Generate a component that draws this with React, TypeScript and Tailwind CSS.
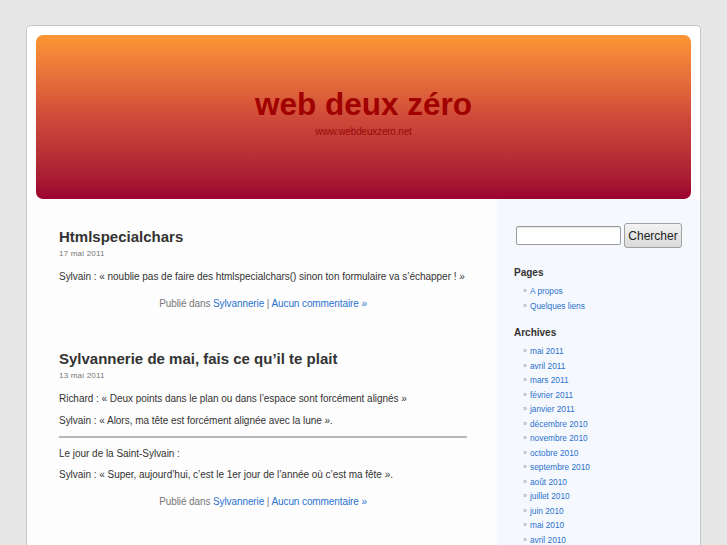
const archives = [
  'mai 2011',
  'avril 2011',
  'mars 2011',
  'février 2011',
  'janvier 2011',
  'décembre 2010',
  'novembre 2010',
  'octobre 2010',
  'septembre 2010',
  'août 2010',
  'juillet 2010',
  'juin 2010',
  'mai 2010',
  'avril 2010',
];

const pages = ['A propos', 'Quelques liens'];

function PostFooter() {
  return (
    <p className="mt-[13px] text-center text-[10px] leading-[14px] tracking-[-0.1px] text-[#777]">
      Publié dans <a className="text-[#2b72d0]">Sylvannerie</a> | <a className="text-[#2b72d0]">Aucun commentaire »</a>
    </p>
  );
}

function SideList({ items }: { items: string[] }) {
  return (
    <ul className="mt-[5px] pl-[9px]">
      {items.map((item) => (
        <li key={item} className="flex items-center gap-[2px] text-[8.3px] leading-[14.5px]">
          <span className="w-[5px] text-[7px] text-[#999]">»</span>
          <a className="text-[#2b72d0]">{item}</a>
        </li>
      ))}
    </ul>
  );
}

export default function App() {
  return (
    <div
      className="min-h-[545px] bg-[#e7e7e7] pt-[25px] text-[#333]"
      style={{ fontFamily: '"Liberation Sans", Arial, sans-serif' }}
    >
      <div className="mx-auto w-[675px] rounded-t-[5px] border border-b-0 border-[#c6c6c6] bg-white">
        <div className="px-[9px] pt-[9px]">
          <div className="flex h-[164px] flex-col items-center rounded-[7px] bg-gradient-to-b from-[#fd9634] via-[#d04a3a] to-[#9c002f] pt-[52px]">
            <h1 className="text-[31.5px] font-bold leading-[34px] text-[#a00000]">web deux zéro</h1>
            <p className="mt-[5px] text-[10px] leading-[12px] tracking-[-0.2px] text-[#9a0a0a]">www.webdeuxzero.net</p>
          </div>
        </div>

        <div className="flex">
          <main className="w-[470px] bg-[#fdfdfd] pb-10 pl-[32px] pr-[30px] pt-[29px] tracking-[-0.03px]">
            <article>
              <h2 className="text-[15px] font-bold leading-[18px] tracking-normal text-[#333]">Htmlspecialchars</h2>
              <p className="mt-[3px] text-[8px] leading-[10px] tracking-[0.2px] text-[#777]">17 mai 2011</p>
              <p className="mt-[11px] whitespace-nowrap text-[10px] leading-[14px]">
                Sylvain : « noublie pas de faire des htmlspecialchars() sinon ton formulaire va s’échapper ! »
              </p>
              <PostFooter />
            </article>

            <article className="mt-[39px]">
              <h2 className="text-[15px] font-bold leading-[18px] tracking-normal text-[#333]">
                Sylvannerie de mai, fais ce qu’il te plait
              </h2>
              <p className="mt-[3px] text-[8px] leading-[10px] tracking-[0.2px] text-[#777]">13 mai 2011</p>
              <p className="mt-[11px] text-[10px] leading-[14px]">
                Richard : « Deux points dans le plan ou dans l’espace sont forcément alignés »
              </p>
              <p className="mt-[8px] text-[10px] leading-[14px]">
                Sylvain : « Alors, ma tête est forcément alignée avec la lune ».
              </p>
              <hr className="mt-[8px] border-0 border-t-2 border-[#b8b8b8]" />
              <p className="mt-[9px] text-[10px] leading-[14px]">Le jour de la Saint-Sylvain :</p>
              <p className="mt-[7px] text-[10px] leading-[14px]">
                Sylvain : « Super, aujourd’hui, c’est le 1er jour de l’année où c’est ma fête ».
              </p>
              <PostFooter />
            </article>
          </main>

          <aside className="flex-1 bg-[#f5f8fc] pb-10 pl-[17px] pr-[17px] pt-[24px]">
            <div className="flex items-center gap-[3px] pl-[2px]">
              <input
                className="h-[19px] w-[105px] rounded-[2px] border border-[#9a9a9a] bg-white shadow-[inset_0_1px_1px_rgba(0,0,0,0.1)]"
                type="text"
              />
              <button className="h-[25px] w-[58px] rounded-[3px] border border-[#a0a0a0] bg-gradient-to-b from-[#f4f4f4] to-[#d9d9d9] text-[12px] text-[#222]">
                Chercher
              </button>
            </div>

            <h3 className="mt-[19px] text-[10px] font-bold leading-[12px] text-[#333]">Pages</h3>
            <SideList items={pages} />

            <h3 className="mt-[14px] text-[10px] font-bold leading-[12px] text-[#333]">Archives</h3>
            <SideList items={archives} />
          </aside>
        </div>
      </div>
    </div>
  );
}
